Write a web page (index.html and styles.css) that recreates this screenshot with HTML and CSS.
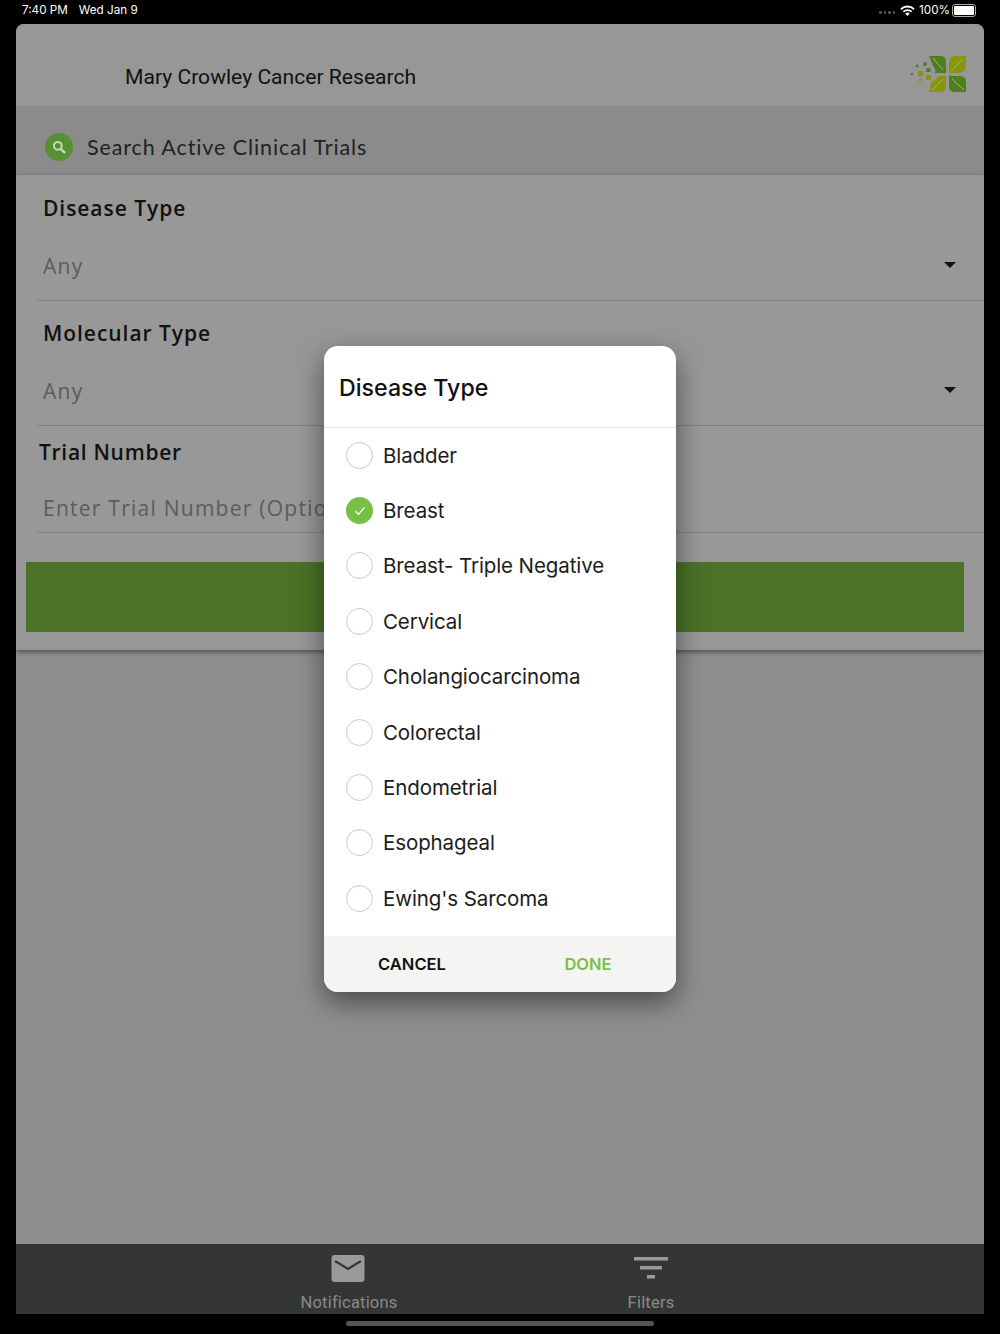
FILE: index.html
```html
<!DOCTYPE html>
<html lang="en">
<head>
    <meta charset="UTF-8">
    <title>Mary Crowley Cancer Research</title>
    <link rel="stylesheet" href="styles.css">
</head>
<body>
    <!-- Status bar -->
    <div class="status-bar">
        <div class="status-left"><span>7:40 PM</span><span>Wed Jan 9</span></div>
        <div class="status-right">
            <span class="signal-dots"><i></i><i></i><i></i><i></i></span>
            <svg class="wifi" width="15" height="11" viewBox="0 0 15 11" aria-hidden="true">
                <path d="M.3 3.6a10.2 10.2 0 0 1 14.4 0l-1.2 1.3a8.5 8.5 0 0 0-12 0z" fill="#fff"/>
                <path d="M2.8 6.1a6.7 6.7 0 0 1 9.4 0L11 7.4a5 5 0 0 0-7 0z" fill="#fff"/>
                <path d="M5.2 8.5a3.3 3.3 0 0 1 4.6 0l-2.3 2.4z" fill="#fff"/>
            </svg>
            <span>100%</span>
            <span class="battery"><span class="battery-fill"></span></span>
        </div>
    </div>

    <div class="app-window">
        <header class="app-header">
            <h1 class="app-title">Mary Crowley Cancer Research</h1>
            <svg class="logo" width="66" height="46" viewBox="0 0 66 46" aria-hidden="true">
                <g fill="#4f7f1c">
                    <circle cx="12" cy="16" r="1.4"/>
                    <circle cx="20" cy="14" r="2"/>
                    <circle cx="7" cy="24" r="1.3"/>
                    <rect x="21.5" y="18" width="4" height="4"/>
                    <path d="M24 6h12q5 0 5 6v11H30q1-4-2-7-2-5-4-10z"/>
                    <path d="M44 26h11q6 0 6 6v10H50q-6 0-6-6z"/>
                </g>
                <g fill="#88960f">
                    <rect x="13" y="21" width="5" height="5"/>
                    <rect x="21" y="25" width="5" height="5"/>
                    <circle cx="15" cy="30" r="1.5"/>
                    <path d="M61 6H50q-6 0-6 6v11h8q9 0 9-9z"/>
                    <path d="M41 26h-7l-4 4-4 2-2 10h11q6 0 6-6z"/>
                </g>
                <g stroke="#a9a9a0" stroke-width="1" fill="none">
                    <path d="M28 8l10 12"/>
                    <path d="M58 9L46 21"/>
                    <path d="M38 29L27 40"/>
                    <path d="M47 29l12 11"/>
                </g>
            </svg>
        </header>

        <div class="search-bar">
            <span class="search-icon">
                <svg width="16" height="16" viewBox="0 0 16 16" aria-hidden="true">
                    <circle cx="6.8" cy="6.8" r="3.9" fill="none" stroke="#c9d6bb" stroke-width="2"/>
                    <path d="M9.8 9.8l3.6 3.6" stroke="#c9d6bb" stroke-width="2.4" stroke-linecap="round"/>
                </svg>
            </span>
            <span class="search-text">Search Active Clinical Trials</span>
        </div>

        <form class="trial-form">
            <div class="field field-disease">
                <div class="field-label">Disease Type</div>
                <div class="field-input"><span>Any</span><i class="caret"></i></div>
            </div>
            <div class="field field-molecular">
                <div class="field-label">Molecular Type</div>
                <div class="field-input"><span>Any</span><i class="caret"></i></div>
            </div>
            <div class="field field-number">
                <div class="field-label">Trial Number</div>
                <div class="field-input"><span>Enter Trial Number (Optional)</span></div>
            </div>
            <div class="submit-btn"></div>
        </form>

        <div class="empty-area"></div>

        <nav class="tab-bar">
            <div class="tab">
                <svg class="tab-mail" width="34" height="27" viewBox="0 0 34 27" aria-hidden="true">
                    <rect x=".5" y="0" width="33" height="27" rx="3" fill="#9a9a9a"/>
                    <path d="M4 6l13 8 13-8" fill="none" stroke="#343635" stroke-width="2.2"/>
                </svg>
                <span>Notifications</span>
            </div>
            <div class="tab">
                <svg width="34" height="27" viewBox="0 0 34 27" aria-hidden="true">
                    <rect x="0" y="2" width="34" height="3.5" fill="#9a9a9a"/>
                    <rect x="6" y="11" width="22" height="3.5" fill="#9a9a9a"/>
                    <rect x="13" y="20" width="8" height="3.5" fill="#9a9a9a"/>
                </svg>
                <span>Filters</span>
            </div>
        </nav>

        <!-- Picker dialog -->
        <div class="picker" role="dialog" aria-modal="true" aria-labelledby="picker-title">
            <h2 id="picker-title" class="picker-title">Disease Type</h2>
            <ul class="picker-list">
                <li class="picker-row"><span class="radio"></span>Bladder</li>
                <li class="picker-row">
                    <span class="radio radio-on">
                        <svg width="12" height="10" viewBox="0 0 12 10" aria-hidden="true"><path d="M1.5 5.3l3 3 6-7" fill="none" stroke="#fff" stroke-width="1.3"/></svg>
                    </span>Breast
                </li>
                <li class="picker-row"><span class="radio"></span>Breast- Triple Negative</li>
                <li class="picker-row"><span class="radio"></span>Cervical</li>
                <li class="picker-row"><span class="radio"></span>Cholangiocarcinoma</li>
                <li class="picker-row"><span class="radio"></span>Colorectal</li>
                <li class="picker-row"><span class="radio"></span>Endometrial</li>
                <li class="picker-row"><span class="radio"></span>Esophageal</li>
                <li class="picker-row"><span class="radio"></span>Ewing's Sarcoma</li>
            </ul>
            <div class="picker-footer">
                <button type="button" class="picker-btn">CANCEL</button>
                <button type="button" class="picker-btn picker-done">DONE</button>
            </div>
        </div>
    </div>

    <div class="home-indicator"></div>
</body>
</html>
```

FILE: styles.css
```css
html, body {
    margin: 0;
    height: 100%;
}

body {
    width: 1000px;
    height: 1334px;
    overflow: hidden;
    display: flex;
    flex-direction: column;
    background-color: #000;
    font-family: "Inter", "Liberation Sans", sans-serif;
}

/* Status bar */
.status-bar {
    height: 24px;
    flex: none;
    display: flex;
    justify-content: space-between;
    align-items: center;
    padding: 0 24px 4px 22px;
    box-sizing: border-box;
    color: #fff;
    font-size: 11.7px;
}

.status-left {
    display: flex;
    gap: 11px;
}

.status-right {
    display: flex;
    align-items: center;
    gap: 4px;
}

.signal-dots {
    display: flex;
    gap: 2px;
    margin-top: 5px;
    margin-right: 1px;
}

.signal-dots i {
    width: 2.5px;
    height: 2.5px;
    border-radius: 50%;
    background-color: #555;
}

.battery {
    position: relative;
    width: 20px;
    height: 9px;
    margin-left: -2px;
    padding: 1px;
    border: 1px solid #aaa;
    border-radius: 3px;
}

.battery-fill {
    display: block;
    height: 100%;
    background-color: #fff;
    border-radius: 1px;
}

/* App window */
.app-window {
    position: relative;
    flex: none;
    height: 1290px;
    margin: 0 16px;
    display: flex;
    flex-direction: column;
    border-radius: 8px 8px 0 0;
    overflow: hidden;
    background-color: #8f8f8f;
}

.app-header {
    height: 82px;
    flex: none;
    display: flex;
    justify-content: space-between;
    align-items: center;
    padding: 0 13px 0 109px;
    box-sizing: border-box;
    background-color: #979797;
}

.app-title {
    margin: 22px 0 0;
    font-family: "Roboto", sans-serif;
    font-size: 21.1px;
    font-weight: 400;
    color: #111;
}

.logo {
    margin-top: 16px;
}

.search-bar {
    height: 69px;
    flex: none;
    display: flex;
    align-items: center;
    gap: 14px;
    padding: 13px 0 0 29px;
    box-sizing: border-box;
    background-color: #8b8b8b;
}

.search-icon {
    width: 28px;
    height: 28px;
    display: flex;
    justify-content: center;
    align-items: center;
    border-radius: 50%;
    background-color: #569033;
}

.search-text {
    font-family: "Lato", sans-serif;
    font-size: 21.5px;
    letter-spacing: 0.9px;
    color: #222;
}

/* Form */
.trial-form {
    height: 475px;
    flex: none;
    padding-top: 18px;
    box-sizing: border-box;
    background-color: #989898;
    box-shadow: 0 2px 5px rgba(0, 0, 0, 0.45);
    position: relative;
    font-family: "Open Sans", sans-serif;
}

.field {
    margin-left: 21px;
}

.field-label {
    height: 30px;
    line-height: 30px;
    padding-left: 6px;
    font-size: 21px;
    font-weight: 600;
    letter-spacing: 0.95px;
    color: #111;
}

.field-input {
    display: flex;
    justify-content: space-between;
    align-items: center;
    padding: 0 28px 0 6px;
    box-sizing: border-box;
    border-bottom: 1px solid #808080;
    font-size: 21px;
    font-weight: 500;
    letter-spacing: 1.25px;
    color: #5c5c5c;
    white-space: nowrap;
}

.field-disease .field-input {
    height: 78px;
    padding-top: 8px;
}

.field-molecular {
    margin-top: 17px;
}

.field-molecular .field-input {
    height: 78px;
    padding-top: 8px;
}

.field-number {
    margin-top: 11px;
}

.field-number .field-label {
    padding-left: 2px;
    letter-spacing: 0.7px;
}

.field-number .field-input {
    height: 66px;
    padding-top: 16px;
}

.caret {
    width: 0;
    height: 0;
    border-left: 6.5px solid transparent;
    border-right: 6.5px solid transparent;
    border-top: 6.5px solid #111;
    margin-top: -1px;
}

.submit-btn {
    height: 70px;
    margin: 29px 20px 0 10px;
    background-color: #4b7227;
}

.empty-area {
    flex: 1;
}

/* Tab bar */
.tab-bar {
    height: 70px;
    flex: none;
    display: flex;
    padding-left: 283px;
    gap: 202px;
    background-color: #343635;
}

.tab {
    width: 100px;
    display: flex;
    flex-direction: column;
    align-items: center;
    padding-top: 11px;
    font-family: "Roboto", sans-serif;
    font-size: 16.5px;
    letter-spacing: 0.2px;
    color: #8a8a8a;
}

.tab span {
    margin-top: 11px;
}

.tab-mail {
    margin-right: 2px;
}

/* Picker dialog */
.picker {
    position: absolute;
    top: 322px;
    left: 308px;
    width: 352px;
    height: 646px;
    display: flex;
    flex-direction: column;
    border-radius: 14px;
    overflow: hidden;
    background-color: #fff;
    box-shadow: 0 10px 28px rgba(0, 0, 0, 0.5);
}

.picker-title {
    height: 81.5px;
    flex: none;
    margin: 0;
    padding-left: 15px;
    line-height: 84px;
    box-sizing: border-box;
    border-bottom: 1px solid #e8e8e8;
    font-size: 23.2px;
    font-weight: 500;
    color: #111;
}

.picker-list {
    flex: 1;
    margin: 0;
    padding: 0;
    list-style: none;
}

.picker-row {
    height: 55.4px;
    display: flex;
    align-items: center;
    gap: 10px;
    padding-left: 22px;
    font-size: 20.5px;
    letter-spacing: -0.1px;
    color: #1c1c1c;
}

.radio {
    width: 27px;
    height: 27px;
    flex: none;
    display: flex;
    justify-content: center;
    align-items: center;
    box-sizing: border-box;
    border: 1.5px solid #c9c9cd;
    border-radius: 50%;
}

.radio-on {
    border: none;
    background-color: #78c043;
}

.picker-footer {
    height: 56px;
    flex: none;
    display: grid;
    grid-template-columns: 176px 176px;
    background-color: #f4f4f3;
}

.picker-btn {
    border: none;
    padding: 0;
    background: none;
    font-family: inherit;
    font-size: 16.5px;
    font-weight: 600;
    color: #111;
}

.picker-done {
    color: #78c043;
}

.home-indicator {
    width: 308px;
    height: 5px;
    margin: 7px auto 0;
    border-radius: 3px;
    background-color: #555;
}
```
